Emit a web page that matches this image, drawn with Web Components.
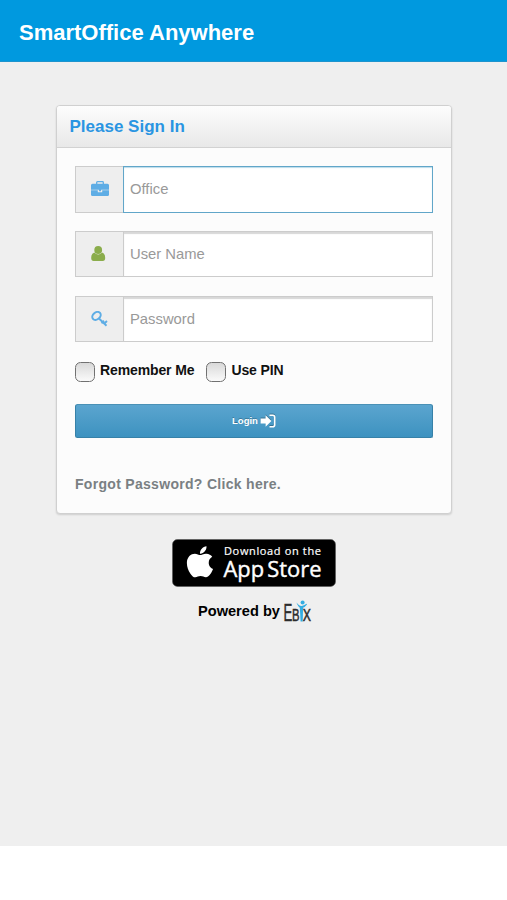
<!DOCTYPE html>
<html lang="en">
<head>
<meta charset="utf-8">
<title>SmartOffice Anywhere</title>
<style>
html,body{margin:0;background:#fff}
body{font-family:"Liberation Sans",Arial,sans-serif}
</style>
</head>
<body>
<sign-in-page></sign-in-page>
<script>
function define(name, html) {
  const t = document.createElement('template');
  t.innerHTML = html;
  customElements.define(name, class extends HTMLElement {
    connectedCallback() {
      if (!this.shadowRoot) this.attachShadow({mode: 'open'}).append(t.content.cloneNode(true));
    }
  });
}

define('app-header', `
<style>
:host{display:flex;align-items:center;height:62px;box-sizing:border-box;padding:4px 0 0 19px;background:#0099df;border-bottom:1px solid #1e94cd;color:#fff;font-weight:bold;font-size:22px;white-space:nowrap}
</style><slot></slot>`);

define('sign-in-card', `
<style>
:host{display:block;box-sizing:border-box;width:396px;height:409px;margin:43px 0 0 56px;border:1px solid #d0d0d0;border-radius:4px;background:#fcfcfc;box-shadow:0 1px 2px rgba(0,0,0,.14);overflow:hidden}
header{height:41px;line-height:41px;padding-left:12.5px;border-bottom:1px solid #d2d2d2;background:linear-gradient(#fdfdfd,#e8e8e8);color:#2a95e2;font-weight:bold;font-size:17px;white-space:nowrap}
main{padding:18px 18px 0}
</style>
<header><slot name="title"></slot></header><main><slot></slot></main>`);

define('icon-field', `
<style>
:host{display:flex;box-sizing:border-box;height:46.6px;margin-bottom:18.2px}
.icon{box-sizing:border-box;width:48px;flex:none;background:#eee;border:1px solid #ccc;border-right:0;display:flex;align-items:center;justify-content:center}
.input{box-sizing:border-box;flex:1;background:#fff;border:1px solid #ccc;box-shadow:inset 0 2px 1px #d8d8d8;padding-left:6px;font-size:14.8px;line-height:45px;color:#999;white-space:nowrap}
:host([focused]) .input{border-color:#61a6c9;box-shadow:inset 0 1px 1px #bcdcea}
</style>
<div class="icon"><slot name="icon"></slot></div><div class="input"><slot></slot></div>`);

define('check-option', `
<style>
:host{display:flex;align-items:flex-start;gap:5px;font-weight:bold;font-size:14px;line-height:17px;letter-spacing:-.12px;color:#111;white-space:nowrap}
i{box-sizing:border-box;width:20px;height:20px;border:1.5px solid #717171;border-radius:5.5px;background:linear-gradient(#d9d9d9,#fafafa)}
</style><i></i><span><slot></slot></span>`);

define('login-button', `
<style>
:host{display:flex;align-items:center;justify-content:center;gap:2px;box-sizing:border-box;height:34px;border:1px solid #3781a8;border-top-color:#4a91b6;border-radius:2.5px;background:linear-gradient(#5ba5cf,#3d92c0);color:#fff;font-weight:bold;font-size:9.5px;text-shadow:0 -1px 0 rgba(0,0,0,.25);white-space:nowrap}
span{margin-top:-2px}
svg{display:block;filter:drop-shadow(0 -1px 0 rgba(0,0,0,.25))}
</style><span><slot></slot></span>
<svg width="16" height="14" viewBox="0 0 16 14"><path d="M.6 4.5h5V1.2L11.4 7l-5.8 5.800V9.5h-5z" fill="#fff"/><path d="M9.5 1.2h3.2a2 2 0 0 1 2 2v7.6a2 2 0 0 1-2 2H9.5" fill="none" stroke="#fff" stroke-width="1.6"/></svg>`);

define('store-badge', `
<style>
:host{display:block;width:164px;height:48px;margin:25px 0 0 172px}
svg{display:block}
</style>
<svg width="164" height="48" viewBox="0 0 164 48" fill="#fff">
<rect x=".5" y=".5" width="163" height="47" rx="5" fill="#000" stroke="#555" stroke-width=".6"/>
<path transform="translate(14.6 5) scale(.0695)" d="M318.7 268.7c-.2-36.7 16.4-64.4 50-84.8-18.8-26.9-47.2-41.7-84.7-44.6-35.5-2.8-74.3 20.7-88.5 20.7-15 0-49.4-19.7-76.4-19.7C63.3 141.2 4 184.8 4 273.5q0 39.3 14.4 81.2c12.8 36.7 59 126.7 107.2 125.2 25.2-.6 43-17.9 75.8-17.9 31.8 0 48.3 17.9 76.4 17.9 48.6-.7 90.4-82.5 102.6-119.3-65.2-30.7-61.7-90-61.7-91.9zm-56.6-164.2c27.3-32.4 24.8-61.9 24-72.5-24.1 1.4-52 16.4-67.9 34.9-17.5 19.8-27.8 44.3-25.6 71.9 26.1 2 49.9-11.4 69.5-34.3z"/>
<text x="52" y="15.8" font-family="Open Sans" font-size="11" textLength="97" stroke="#fff" stroke-width=".2">Download on the</text>
<text x="51.5" y="38" font-family="Open Sans" font-size="21.5" textLength="98" lengthAdjust="spacingAndGlyphs" word-spacing="-2.5" stroke="#fff" stroke-width=".4">App Store</text>
</svg>`);

define('powered-by', `
<style>
:host{display:flex;align-items:flex-start;gap:4px;margin:12px 0 0 198px;height:30px;font-weight:bold;font-size:14.6px;line-height:24px;color:#000;white-space:nowrap}
svg{display:block;flex:none;overflow:visible}
</style><span><slot></slot></span>
<svg width="29" height="30" viewBox="0 0 29 30" font-family="Liberation Sans" font-weight="400" fill="#2c2c2c" stroke="#2c2c2c" stroke-width=".5">
<text x="-.5" y="22" font-size="23" textLength="8.8" lengthAdjust="spacingAndGlyphs">E</text>
<text x="8" y="22" font-size="17" textLength="7.5" lengthAdjust="spacingAndGlyphs">B</text>
<text x="18.8" y="22" font-size="17" textLength="8.2" lengthAdjust="spacingAndGlyphs">X</text>
<g stroke="none" fill="#33ade2"><path d="M15.8 8.2h3.3L18.7 22.5h-2.1z"/><circle cx="18.6" cy="3.4" r="2"/><path d="M12.4 3.4q3 3.6 5.2 3.5t4.9-2.2l.5.9q-2.5 3.400-5 3.700-3.200.2-5.600-5.900z"/></g>
</svg>`);

define('sign-in-page', `
<style>
:host{display:block}
.page{height:846px;background:#efefef;display:flow-root}
.checks{display:flex;gap:12px;height:42px;margin-top:20px}
.forgot{margin-top:37px;font-weight:bold;font-size:14px;line-height:18px;letter-spacing:.3px;color:#7a8083;white-space:nowrap}
svg{display:block}
</style>
<div class="page">
<app-header>SmartOffice Anywhere</app-header>
<sign-in-card>
<span slot="title">Please Sign In</span>
<icon-field focused>
<svg slot="icon" width="18" height="16" viewBox="0 0 18 16"><path d="M5.7 3V1.5Q5.7.7 6.5.7h5q.8 0 .8.8V3" fill="none" stroke="#5eade5" stroke-width="1.3"/><path d="M1.5 2.7h15Q18 2.7 18 4.2V8.7H0V4.2Q0 2.7 1.5 2.7ZM0 9.3H6.8V11.2H11.2V9.3H18V13.7Q18 15 16.5 15H1.5Q0 15 0 13.7ZM7.900 8.6H10.1V10.3H7.9Z" fill="#5eade5"/></svg>Office</icon-field>
<icon-field>
<svg slot="icon" width="20" height="18" viewBox="0 0 20 18" fill="#8bad4c"><circle cx="8.2" cy="5" r="3.9"/><path d="M4.300 7.500Q1.200 8.200 1.200 13Q1.200 15.900 3.600 15.900H12.800Q15.200 15.900 15.200 13Q15.200 8.200 12.100 7.500Q8.200 11.500 4.300 7.500Z"/></svg>User Name</icon-field>
<icon-field>
<svg slot="icon" width="18" height="16" viewBox="0 0 18 16" fill="none" stroke="#5eade5"><ellipse cx="5.5" cy="4.9" rx="4.6" ry="3.5" transform="rotate(-40 5.5 4.9)" stroke-width="2"/><path d="M8 7.5L15.500 14.7M10.5 12.2L13 9.8M13.3 12.5L16 10" stroke-width="1.9"/></svg>Password</icon-field>
<div class="checks"><check-option>Remember Me</check-option><check-option>Use PIN</check-option></div>
<login-button>Login</login-button>
<div class="forgot">Forgot Password? Click here.</div>
</sign-in-card>
<store-badge></store-badge>
<powered-by>Powered by</powered-by>
</div>`);
</script>
</body>
</html>
